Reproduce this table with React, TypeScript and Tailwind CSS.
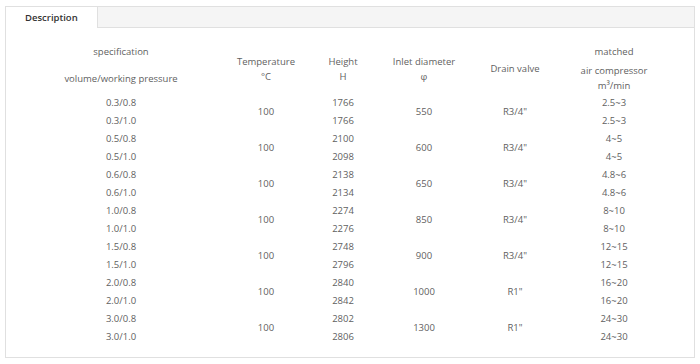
const rows = [
  { spec: ["0.3/0.8", "0.3/1.0"], h: ["1766", "1766"], inlet: "550", drain: "R3/4\"", air: "2.5~3" },
  { spec: ["0.5/0.8", "0.5/1.0"], h: ["2100", "2098"], inlet: "600", drain: "R3/4\"", air: "4~5" },
  { spec: ["0.6/0.8", "0.6/1.0"], h: ["2138", "2134"], inlet: "650", drain: "R3/4\"", air: "4.8~6" },
  { spec: ["1.0/0.8", "1.0/1.0"], h: ["2274", "2276"], inlet: "850", drain: "R3/4\"", air: "8~10" },
  { spec: ["1.5/0.8", "1.5/1.0"], h: ["2748", "2796"], inlet: "900", drain: "R3/4\"", air: "12~15" },
  { spec: ["2.0/0.8", "2.0/1.0"], h: ["2840", "2842"], inlet: "1000", drain: "R1\"", air: "16~20" },
  { spec: ["3.0/0.8", "3.0/1.0"], h: ["2802", "2806"], inlet: "1300", drain: "R1\"", air: "24~30" },
];

export default function App() {
  return (
    <div className="w-[700px] h-[364px] bg-white p-[5px] pt-[6px] font-['Open_Sans',sans-serif] text-[#5f5f5f]">
      <div className="h-[352px] border border-[#e0e0e0] flex flex-col">
        <div className="h-[21px] bg-[#f5f5f5] border-b border-[#e0e0e0] flex">
          <div className="w-[92px] h-[21px] bg-white border-r border-[#e0e0e0] text-[9.5px] font-semibold text-[#333] leading-[21px] pl-[19px]">
            Description
          </div>
        </div>
        <div className="pt-[15px] pl-[14px]">
          <table className="table-fixed border-collapse text-[9.5px] text-center">
            <colgroup>
              <col className="w-[202px]" />
              <col className="w-[88px]" />
              <col className="w-[66px]" />
              <col className="w-[96px]" />
              <col className="w-[86px]" />
              <col className="w-[112px]" />
            </colgroup>
            <thead>
              <tr className="h-[51px]">
                <th className="font-normal align-middle pb-[8px]">
                  <p className="leading-[15px]">specification</p>
                  <p className="leading-[15px] mt-[12px]">volume/working pressure</p>
                </th>
                <th className="font-normal align-middle">
                  <p className="leading-[15px]">Temperature</p>
                  <p className="leading-[15px]">°C</p>
                </th>
                <th className="font-normal align-middle">
                  <p className="leading-[15px]">Height</p>
                  <p className="leading-[15px]">H</p>
                </th>
                <th className="font-normal align-middle">
                  <p className="leading-[15px]">Inlet diameter</p>
                  <p className="leading-[15px]">φ</p>
                </th>
                <th className="font-normal align-middle">
                  <p className="leading-[15px]">Drain valve</p>
                </th>
                <th className="font-normal align-middle">
                  <p className="leading-[15px]">matched</p>
                  <p className="leading-[15px] mt-[4px]">air compressor</p>
                  <p className="leading-[15px]">m³/min</p>
                </th>
              </tr>
            </thead>
            <tbody>
              {rows.map((r, i) => (
                <>
                  <tr key={i + "a"} className="h-[18px] leading-[18px]">
                    <td>{r.spec[0]}</td>
                    <td rowSpan={2}>100</td>
                    <td>{r.h[0]}</td>
                    <td rowSpan={2}>{r.inlet}</td>
                    <td rowSpan={2}>{r.drain}</td>
                    <td>{r.air}</td>
                  </tr>
                  <tr key={i + "b"} className="h-[18px] leading-[18px]">
                    <td>{r.spec[1]}</td>
                    <td>{r.h[1]}</td>
                    <td>{r.air}</td>
                  </tr>
                </>
              ))}
            </tbody>
          </table>
        </div>
      </div>
    </div>
  );
}
